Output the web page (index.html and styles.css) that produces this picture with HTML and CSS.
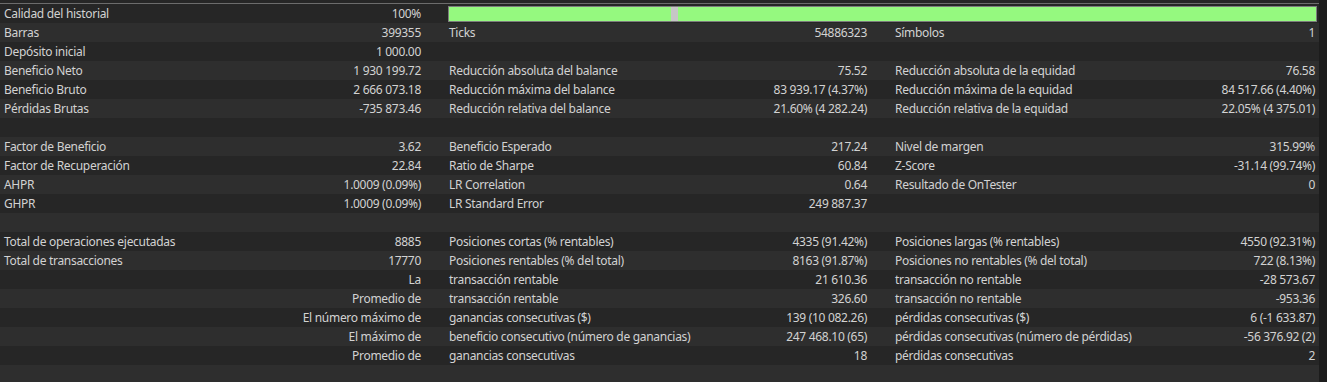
FILE: index.html
```html
<!DOCTYPE html>
<html lang="es">
<head>
<meta charset="utf-8">
<title>Informe</title>
<link rel="stylesheet" href="styles.css">
</head>
<body>
<div class="page">
  <div class="table">
    <div class="row">
      <div class="group"><span>Calidad del historial</span><span>100%</span></div>
      <div class="quality"><div class="fill"></div><div class="gap-mark"></div><div class="fill grow"></div></div>
    </div>
    <div class="row">
      <div class="group"><span>Barras</span><span>399355</span></div>
      <div class="group"><span>Ticks</span><span>54886323</span></div>
      <div class="group"><span>Símbolos</span><span>1</span></div>
    </div>
    <div class="row">
      <div class="group"><span>Depósito inicial</span><span>1 000.00</span></div>
      <div class="group"></div>
      <div class="group"></div>
    </div>
    <div class="row">
      <div class="group"><span>Beneficio Neto</span><span>1 930 199.72</span></div>
      <div class="group"><span>Reducción absoluta del balance</span><span>75.52</span></div>
      <div class="group"><span>Reducción absoluta de la equidad</span><span>76.58</span></div>
    </div>
    <div class="row">
      <div class="group"><span>Beneficio Bruto</span><span>2 666 073.18</span></div>
      <div class="group"><span>Reducción máxima del balance</span><span>83 939.17 (4.37%)</span></div>
      <div class="group"><span>Reducción máxima de la equidad</span><span>84 517.66 (4.40%)</span></div>
    </div>
    <div class="row">
      <div class="group"><span>Pérdidas Brutas</span><span>-735 873.46</span></div>
      <div class="group"><span>Reducción relativa del balance</span><span>21.60% (4 282.24)</span></div>
      <div class="group"><span>Reducción relativa de la equidad</span><span>22.05% (4 375.01)</span></div>
    </div>
    <div class="row"></div>
    <div class="row">
      <div class="group"><span>Factor de Beneficio</span><span>3.62</span></div>
      <div class="group"><span>Beneficio Esperado</span><span>217.24</span></div>
      <div class="group"><span>Nivel de margen</span><span>315.99%</span></div>
    </div>
    <div class="row">
      <div class="group"><span>Factor de Recuperación</span><span>22.84</span></div>
      <div class="group"><span>Ratio de Sharpe</span><span>60.84</span></div>
      <div class="group"><span>Z-Score</span><span>-31.14 (99.74%)</span></div>
    </div>
    <div class="row">
      <div class="group"><span>AHPR</span><span>1.0009 (0.09%)</span></div>
      <div class="group"><span>LR Correlation</span><span>0.64</span></div>
      <div class="group"><span>Resultado de OnTester</span><span>0</span></div>
    </div>
    <div class="row">
      <div class="group"><span>GHPR</span><span>1.0009 (0.09%)</span></div>
      <div class="group"><span>LR Standard Error</span><span>249 887.37</span></div>
      <div class="group"></div>
    </div>
    <div class="row"></div>
    <div class="row">
      <div class="group"><span>Total de operaciones ejecutadas</span><span>8885</span></div>
      <div class="group"><span>Posiciones cortas (% rentables)</span><span>4335 (91.42%)</span></div>
      <div class="group"><span>Posiciones largas (% rentables)</span><span>4550 (92.31%)</span></div>
    </div>
    <div class="row">
      <div class="group"><span>Total de transacciones</span><span>17770</span></div>
      <div class="group"><span>Posiciones rentables (% del total)</span><span>8163 (91.87%)</span></div>
      <div class="group"><span>Posiciones no rentables (% del total)</span><span>722 (8.13%)</span></div>
    </div>
    <div class="row">
      <div class="group"><span></span><span>La</span></div>
      <div class="group"><span>transacción rentable</span><span>21 610.36</span></div>
      <div class="group"><span>transacción no rentable</span><span>-28 573.67</span></div>
    </div>
    <div class="row">
      <div class="group"><span></span><span>Promedio de</span></div>
      <div class="group"><span>transacción rentable</span><span>326.60</span></div>
      <div class="group"><span>transacción no rentable</span><span>-953.36</span></div>
    </div>
    <div class="row">
      <div class="group"><span></span><span>El número máximo de</span></div>
      <div class="group"><span>ganancias consecutivas ($)</span><span>139 (10 082.26)</span></div>
      <div class="group"><span>pérdidas consecutivas ($)</span><span>6 (-1 633.87)</span></div>
    </div>
    <div class="row">
      <div class="group"><span></span><span>El máximo de</span></div>
      <div class="group"><span>beneficio consecutivo (número de ganancias)</span><span>247 468.10 (65)</span></div>
      <div class="group"><span>pérdidas consecutivas (número de pérdidas)</span><span>-56 376.92 (2)</span></div>
    </div>
    <div class="row">
      <div class="group"><span></span><span>Promedio de</span></div>
      <div class="group"><span>ganancias consecutivas</span><span>18</span></div>
      <div class="group"><span>pérdidas consecutivas</span><span>2</span></div>
    </div>
    <div class="row"></div>
  </div>
  <div class="scrollbar"></div>
</div>
</body>
</html>
```

FILE: styles.css
```css
html, body {
  margin: 0;
  padding: 0;
  background: #262626;
}

body {
  font-family: "Noto Sans", "Liberation Sans", sans-serif;
  font-size: 12px;
  letter-spacing: -0.3px;
  color: #d2d2d2;
  width: 1327px;
  height: 382px;
  overflow: hidden;
}

.page {
  display: flex;
  height: 382px;
  padding-top: 3px;
  box-sizing: border-box;
}

.table {
  flex: 1;
  border-top: 1px solid #6c6c6c;
}

.scrollbar {
  width: 8px;
  margin-top: -3px;
  background: #1c1c1c;
}

.row {
  display: grid;
  grid-template-columns: 417px 418px 420px;
  column-gap: 28px;
  padding-left: 4px;
  height: 19px;
  line-height: 19px;
  background: #262626;
}

.row:nth-child(even) {
  background: #2e2e2e;
}

.group {
  display: flex;
  justify-content: space-between;
  white-space: nowrap;
}

.quality {
  grid-column: 2 / 4;
  margin: 2px -2px 1px -1px;
  border: 1px solid #7c7c7c;
  display: flex;
  box-sizing: border-box;
}

.fill {
  width: 222px;
  background: #95f97f;
}

.fill.grow {
  flex: 1;
  width: auto;
}

.gap-mark {
  width: 7px;
  background: #c6c6c6;
}
```
